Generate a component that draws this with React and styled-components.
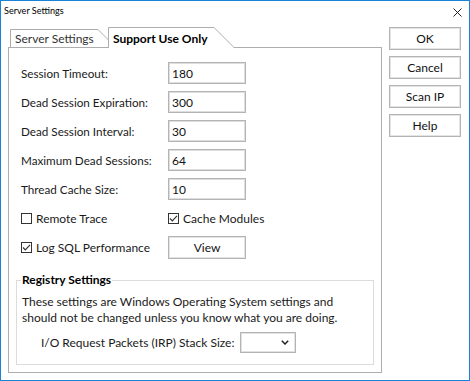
import React from "react";
import styled, { createGlobalStyle } from "styled-components";

const GlobalStyle = createGlobalStyle`
  html, body {
    margin: 0;
    padding: 0;
    background: #ffffff;
  }
  * {
    box-sizing: border-box;
  }
`;

const FONT = `Lato, "Segoe UI", "Noto Sans", sans-serif`;

const Window = styled.div`
  width: 470px;
  height: 381px;
  border: 1px solid #1883d7;
  background: #ffffff;
  display: flex;
  flex-direction: column;
  font-family: ${FONT};
  font-size: 11.7px;
  color: #1a1a1a;
`;

const TitleBar = styled.div`
  height: 26px;
  display: flex;
  justify-content: space-between;
  align-items: flex-start;
  padding: 4px 7px 0 3px;
`;

const TitleText = styled.span`
  font-size: 9.1px;
  color: #000;
`;

const CloseIcon = styled.svg`
  width: 9px;
  height: 9px;
  margin-top: 3px;
`;

const Body = styled.div`
  flex: 1;
  display: flex;
  gap: 7px;
  padding: 0 8px 7px 7px;
`;

const LeftColumn = styled.div`
  width: 374px;
  display: flex;
  flex-direction: column;
`;

const TabStrip = styled.div`
  height: 21px;
  display: flex;
  align-items: flex-end;
  padding-left: 2px;
`;

const TabShape = styled.div`
  position: relative;
  height: ${(p) => (p.$active ? 21 : 18)}px;
  width: ${(p) => p.$width}px;
  margin-bottom: ${(p) => (p.$active ? 0 : 1)}px;
  margin-left: ${(p) => p.$offset || 0}px;
  z-index: ${(p) => (p.$active ? 3 : 1)};
  padding: ${(p) => (p.$active ? "4px" : "2px")} 0 0 5px;
  font-size: 12px;
  font-weight: ${(p) => (p.$active ? 700 : 400)};
  color: ${(p) => (p.$active ? "#000" : "#333")};
  white-space: nowrap;

  svg {
    position: absolute;
    left: 0;
    top: 0;
    z-index: -1;
  }
`;

const Tab = ({ label, active, width, offset }) => {
  const h = active ? 21 : 18;
  return (
    <TabShape $active={active} $width={width} $offset={offset}>
      <svg width={width} height={h}>
        <path
          d={`M0.5 ${h} V0.5 H${width - h} L${width - 0.5} ${h}`}
          fill="#ffffff"
          stroke="#adadad"
          strokeWidth="1"
        />
      </svg>
      {label}
    </TabShape>
  );
};

const Panel = styled.div`
  position: relative;
  z-index: 2;
  margin-top: -1px;
  flex: 1;
  border: 1px solid #adadad;
  background: #ffffff;
  padding: 14px 7px 7px 7px;
  display: flex;
  flex-direction: column;
`;

const Form = styled.div`
  display: flex;
  flex-direction: column;
  gap: 7px;
  padding-left: 5px;
`;

const Row = styled.div`
  display: grid;
  grid-template-columns: 147px auto;
  align-items: center;
  height: 22px;
`;

const TextBox = styled.div`
  width: 78px;
  height: 22px;
  border: 1px solid #b4b4b4;
  box-shadow: inset 0 0 0 1px #dedede;
  padding: 0 3px;
  display: flex;
  align-items: center;
  font-size: 12px;
  color: #111;
`;

const CheckLabel = styled.label`
  display: flex;
  align-items: center;
  gap: 4px;
  font-size: 12px;
`;

const Box = styled.svg`
  width: 11px;
  height: 11px;
  flex: none;
`;

const Check = ({ checked, children }) => (
  <CheckLabel>
    <Box viewBox="0 0 11 11">
      <rect x="0.5" y="0.5" width="10" height="10" fill="#fff" stroke="#333" />
      {checked && (
        <path d="M2 5.5 L4.3 7.8 L9 2.8" fill="none" stroke="#333" strokeWidth="1.2" />
      )}
    </Box>
    {children}
  </CheckLabel>
);

const DialogButton = styled.button`
  width: ${(p) => p.$width || 72}px;
  height: 23px;
  border: 1px solid #b4b4b4;
  box-shadow: inset 0 0 0 1px #e4e4e4;
  background: #ffffff;
  font-family: ${FONT};
  font-size: 12px;
  color: #111;
  padding: 0;
  cursor: pointer;
`;

const GroupBox = styled.fieldset`
  margin: 14px 0 0 0;
  border: 1px solid #dcdcdc;
  padding: 0 4px 11px 4px;
  min-width: 0;
`;

const Legend = styled.legend`
  padding: 0 1px;
  font-weight: 700;
  font-size: 12px;
  line-height: 16px;
  color: #000;
`;

const Note = styled.p`
  margin: 6px 0 0 1px;
  line-height: 16px;
  font-size: 12px;
`;

const IrpRow = styled.div`
  display: flex;
  align-items: center;
  gap: 6px;
  margin-top: 6px;
  padding-left: 20px;
  font-size: 12px;
`;

const SelectBox = styled.div`
  width: 56px;
  height: 21px;
  border: 1px solid #b4b4b4;
  box-shadow: inset 0 0 0 1px #e2e2e2;
  display: flex;
  align-items: center;
  justify-content: flex-end;
  padding-right: 6px;
`;

const ButtonColumn = styled.div`
  display: flex;
  flex-direction: column;
  gap: 6px;
`;

const fields = [
  ["Session Timeout:", "180"],
  ["Dead Session Expiration:", "300"],
  ["Dead Session Interval:", "30"],
  ["Maximum Dead Sessions:", "64"],
  ["Thread Cache Size:", "10"],
];

export default function App() {
  return (
    <>
      <GlobalStyle />
      <Window>
        <TitleBar>
          <TitleText>Server Settings</TitleText>
          <CloseIcon viewBox="0 0 9 9">
            <path d="M0.5 0.5 L8.5 8.5 M8.5 0.5 L0.5 8.5" stroke="#222" strokeWidth="1" />
          </CloseIcon>
        </TitleBar>
        <Body>
          <LeftColumn>
            <TabStrip>
              <Tab label="Server Settings" width={106} />
              <Tab label="Support Use Only" width={127} offset={-8} active />
            </TabStrip>
            <Panel>
              <Form>
                {fields.map(([label, value]) => (
                  <Row key={label}>
                    <span>{label}</span>
                    <TextBox>{value}</TextBox>
                  </Row>
                ))}
                <Row>
                  <Check>Remote Trace</Check>
                  <Check checked>Cache Modules</Check>
                </Row>
                <Row>
                  <Check checked>Log SQL Performance</Check>
                  <DialogButton $width={78} type="button">View</DialogButton>
                </Row>
              </Form>
              <GroupBox>
                <Legend>Registry Settings</Legend>
                <Note>
                  These settings are Windows Operating System settings and
                  <br />
                  should not be changed unless you know what you are doing.
                </Note>
                <IrpRow>
                  <span>I/O Request Packets (IRP) Stack Size:</span>
                  <SelectBox>
                    <svg width="8" height="5" viewBox="0 0 8 5">
                      <path d="M0.8 0.8 L4 4 L7.2 0.8" fill="none" stroke="#222" strokeWidth="1.5" />
                    </svg>
                  </SelectBox>
                </IrpRow>
              </GroupBox>
            </Panel>
          </LeftColumn>
          <ButtonColumn>
            <DialogButton type="button">OK</DialogButton>
            <DialogButton type="button">Cancel</DialogButton>
            <DialogButton type="button">Scan IP</DialogButton>
            <DialogButton type="button">Help</DialogButton>
          </ButtonColumn>
        </Body>
      </Window>
    </>
  );
}
